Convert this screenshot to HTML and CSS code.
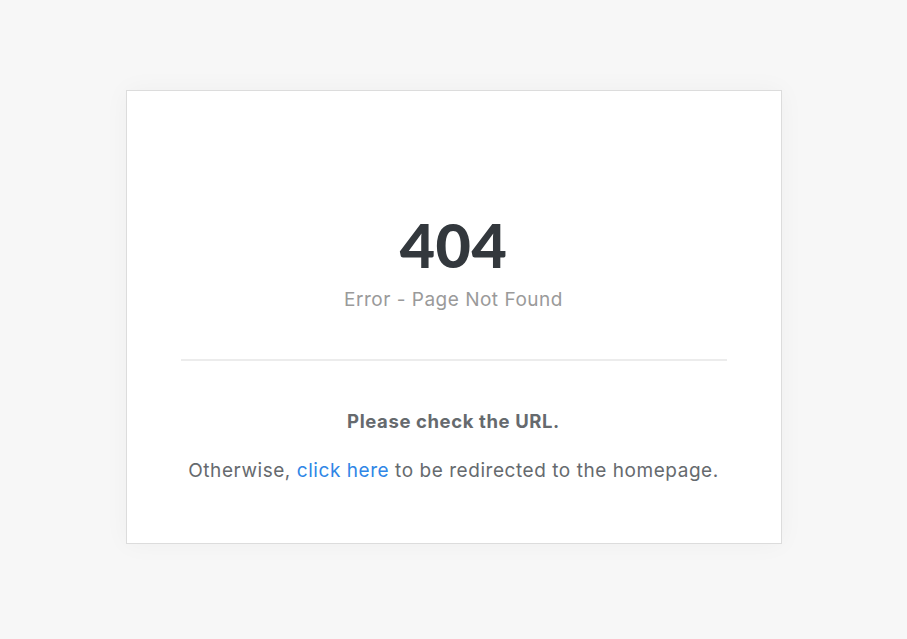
FILE: index.html
```html
<!DOCTYPE html>
<html lang="en">
<head>
<meta charset="utf-8">
<title>404 - Page Not Found</title>
<link rel="stylesheet" href="styles.css">
</head>
<body>
  <main class="page">
    <section class="card">
      <header class="card-head">
        <h1 class="code">404</h1>
        <p class="subtitle">Error - Page Not Found</p>
      </header>
      <hr class="divider">
      <div class="card-body">
        <p class="hint">Please check the URL.</p>
        <p class="redirect">Otherwise, <a href="#" class="link">click here</a> to be redirected to the homepage.</p>
      </div>
    </section>
  </main>
</body>
</html>
```

FILE: styles.css
```css
html, body {
  margin: 0;
  padding: 0;
  height: 100%;
}

body {
  background: #f7f7f7;
  font-family: Inter, "Open Sans", sans-serif;
}

.page {
  display: flex;
  justify-content: center;
  padding-top: 90px;
}

.card {
  box-sizing: border-box;
  width: 656px;
  height: 454px;
  background: #fff;
  border: 1px solid #dcdcdc;
  box-shadow: 0 0 24px rgba(0, 0, 0, 0.04);
  padding: 0 54px;
  text-align: center;
}

.card-head {
  padding-top: 121px;
  padding-bottom: 47px;
}

.code {
  margin: 0;
  font-family: Lato, "Open Sans", sans-serif;
  font-size: 61px;
  line-height: 66px;
  font-weight: 900;
  color: #33383d;
  letter-spacing: 0.5px;
}

.subtitle {
  margin: 10px 0 0;
  font-size: 19px;
  line-height: 24px;
  letter-spacing: 0.5px;
  color: #9a9a9a;
}

.divider {
  margin: 0;
  border: 0;
  border-top: 2px solid #ececec;
}

.card-body {
  padding-top: 48px;
}

.hint {
  margin: 0;
  font-size: 18.5px;
  line-height: 24px;
  font-weight: 700;
  letter-spacing: 0.6px;
  color: #666a6e;
}

.redirect {
  margin: 26px 0 0;
  font-size: 19px;
  line-height: 24px;
  letter-spacing: 0.55px;
  color: #666a6e;
}

.link {
  color: #2f86e6;
  text-decoration: none;
}
```
